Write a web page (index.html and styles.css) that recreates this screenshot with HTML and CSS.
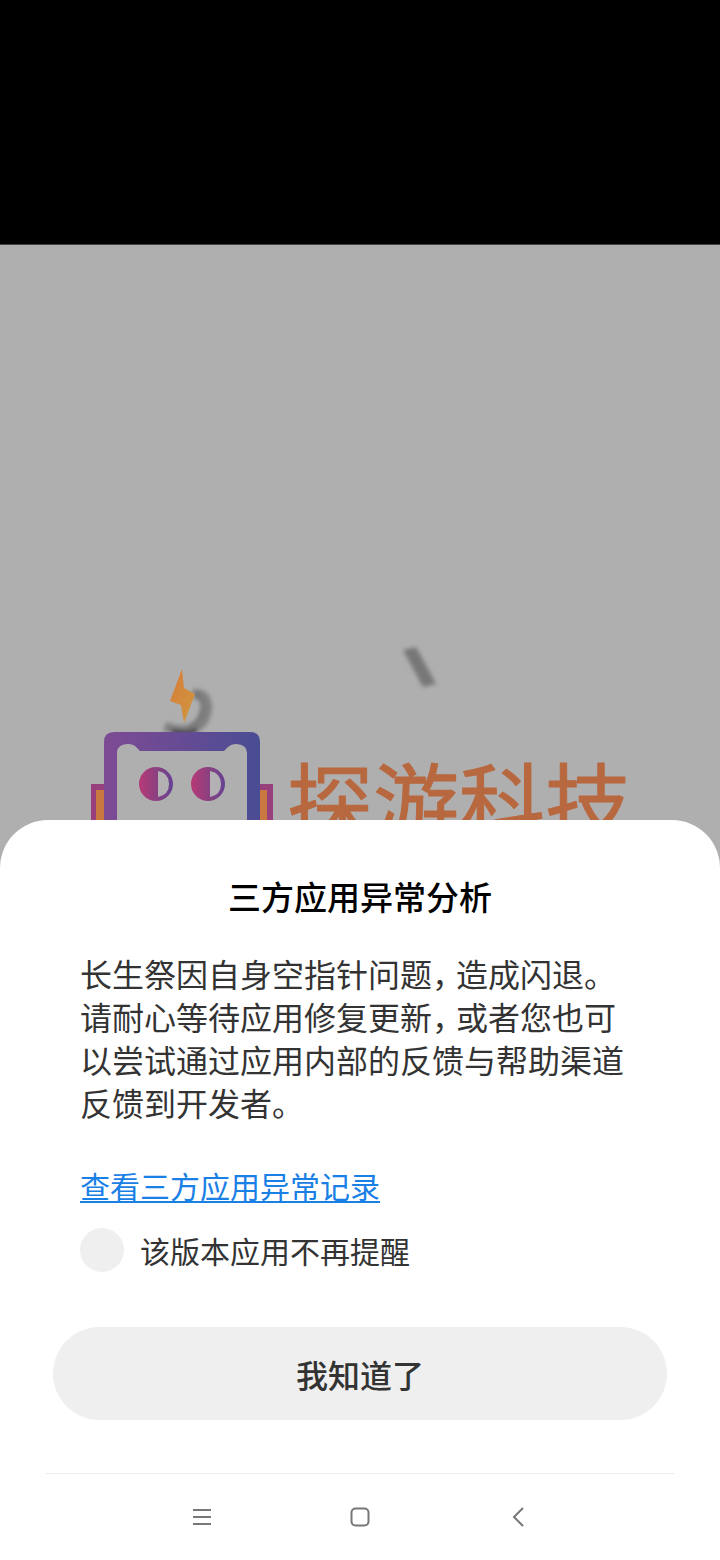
FILE: index.html
```html
<!DOCTYPE html>
<html lang="zh-CN">
<head>
  <meta charset="utf-8">
  <meta name="viewport" content="width=device-width, initial-scale=1">
  <title>三方应用异常分析</title>
  <link rel="stylesheet" href="styles.css">
</head>
<body>
  <div class="top-bar"></div>

  <!-- Dimmed splash screen behind the dialog -->
  <main class="splash">
    <svg class="splash-art" viewBox="0 640 720 228">
      <defs>
        <linearGradient id="head" x1="0" x2="1" y1="0" y2="0">
          <stop offset="0" stop-color="#7d4b94"/>
          <stop offset="0.5" stop-color="#664b94"/>
          <stop offset="1" stop-color="#494d94"/>
        </linearGradient>
        <linearGradient id="eye" x1="0" x2="1" y1="0" y2="0">
          <stop offset="0" stop-color="#b83a77"/>
          <stop offset="0.5" stop-color="#8d407f"/>
          <stop offset="1" stop-color="#654393"/>
        </linearGradient>
        <linearGradient id="bolt" x1="0" x2="1" y1="0" y2="1">
          <stop offset="0" stop-color="#d77c38"/>
          <stop offset="1" stop-color="#cf9840"/>
        </linearGradient>
        <filter id="soft" x="-50%" y="-50%" width="200%" height="200%">
          <feGaussianBlur stdDeviation="2"/>
        </filter>
      </defs>

      <!-- brush strokes -->
      <g filter="url(#soft)" fill="none">
        <path d="M193 694 Q207 693 207 708 Q205 728 185 730 Q174 731 165 726" stroke="#808080" stroke-width="10"/>
        <path d="M194 693 Q201 696 202 707 Q200 721 190 726" stroke="#666" stroke-width="2"/>
        <path d="M172 731 Q185 735 197 730" stroke="#292536" stroke-width="4"/>
        <path d="M403 650 L416 647 L436 684 L423 687 Z" fill="#777"/>
      </g>

      <!-- robot -->
      <path d="M182 669 L184 688 L195 694 L184 723 L181 705 L170 701 Z" fill="url(#bolt)"/>
      <path d="M91 784 H104 V868 H91 Z M260 784 H273 V868 H260 Z" fill="#98407c"/>
      <path d="M96 790 H104 V868 H96 Z M260 790 H267 V868 H260 Z" fill="#c9793f"/>
      <path d="M104 868 V742 Q104 732 114 732 H250 Q260 732 260 742 V868 Z" fill="url(#head)"/>
      <path d="M117 868 V752 Q118 744 128 744 Q134 744 137 748 L140 751 H224 L228 747 Q231 744 237 744 Q247 745 247 753 V868 Z" fill="#afafaf"/>
      <g fill="url(#eye)">
        <circle cx="156" cy="784" r="17"/>
        <circle cx="208" cy="784" r="17"/>
      </g>
      <path d="M158 771 Q169 773 169 784 Q169 795 158 797 Z M210 771 Q221 773 221 784 Q221 795 210 797 Z" fill="#b4b1b4"/>

      <text class="brand" x="287" y="836">探游科技</text>
    </svg>
  </main>

  <section class="sheet" role="dialog" aria-labelledby="title">
    <h1 id="title">三方应用异常分析</h1>

    <div class="content">
      <p class="message">长生祭因自身空指针问题<span class="comma">，</span>造成闪退。请耐心等待应用修复更新<span class="comma">，</span>或者您也可以尝试通过应用内部的反馈与帮助渠道反馈到开发者。</p>
      <a class="records" href="#">查看三方应用异常记录</a>
      <label class="mute" for="mute">
        <input type="checkbox" id="mute">
        该版本应用不再提醒
      </label>
    </div>

    <button class="confirm" type="button">我知道了</button>

    <!-- System navigation -->
    <nav class="nav-bar">
      <button type="button" aria-label="菜单">
        <svg viewBox="0 0 20 20"><path d="M1 3H19M1 10H19M1 17H19"/></svg>
      </button>
      <button type="button" aria-label="主页">
        <svg viewBox="0 0 20 20"><rect x="1.500" y="1.500" width="17" height="17" rx="4"/></svg>
      </button>
      <button type="button" aria-label="返回">
        <svg viewBox="0 0 20 20"><path d="M15 1L6 10L15 19"/></svg>
      </button>
    </nav>
  </section>
</body>
</html>
```

FILE: styles.css
```css
* {
    box-sizing: border-box;
}

body {
    display: flex;
    flex-direction: column;
    min-height: 100vh;
    margin: 0;
    font-family: "Noto Sans CJK SC", sans-serif;
    background-color: #afafaf;
    color: #333;
}

.top-bar {
    height: 245px;
    background-color: #000;
    border-bottom: 1px solid #444;
}

/* splash */
.splash {
    flex: 1;
    display: flex;
    align-items: flex-end;
    overflow: hidden;
}

.splash-art {
    display: block;
    width: 100%;
}

.brand {
    font-size: 86px;
    fill: #b8683f;
    stroke: #b8683f;
    stroke-width: 1px;
    stroke-linejoin: round;
}

/* dialog */
.sheet {
    position: relative;
    margin-top: -48px;
    padding-top: 54px;
    background-color: #fff;
    border-radius: 48px 48px 0 0;
}

h1 {
    margin: 0 0 34px;
    font-size: 33px;
    line-height: 44px;
    font-weight: 500;
    text-align: center;
    color: #000;
}

.content {
    display: flex;
    flex-direction: column;
    align-items: flex-start;
    padding: 0 80px;
}

.message {
    margin: 0 0 39px;
    font-size: 32px;
    line-height: 43px;
}

/* half-width punctuation */
.comma {
    margin-right: 8px;
    font-feature-settings: "halt";
}

.records {
    font-size: 30px;
    line-height: 44px;
    color: #1a80e6;
    text-underline-offset: 3px;
    text-decoration-thickness: 2px;
}

.mute {
    display: flex;
    align-items: center;
    gap: 16px;
    margin-top: 21px;
    font-size: 30px;
    line-height: 44px;
}

.mute input {
    appearance: none;
    width: 44px;
    height: 44px;
    margin: 0;
    border-radius: 50%;
    background-color: #efefef;
}

.mute input:checked {
    background-color: #1a80e6;
}

.confirm {
    display: block;
    width: calc(100% - 106px);
    height: 93px;
    margin: 55px auto 53px;
    border: none;
    border-radius: 47px;
    background-color: #efefef;
    color: #333;
    font-family: inherit;
    font-size: 32px;
    font-weight: 500;
}

.nav-bar {
    display: flex;
    justify-content: center;
    gap: 114px;
    margin: 0 46px;
    padding: 21px 0;
    border-top: 1px solid #ebebeb;
}

.nav-bar button {
    width: 44px;
    height: 44px;
    padding: 12px;
    border: none;
    background: none;
}

.nav-bar svg {
    display: block;
    width: 20px;
    height: 20px;
    fill: none;
    stroke: #777;
    stroke-width: 2;
}
```
